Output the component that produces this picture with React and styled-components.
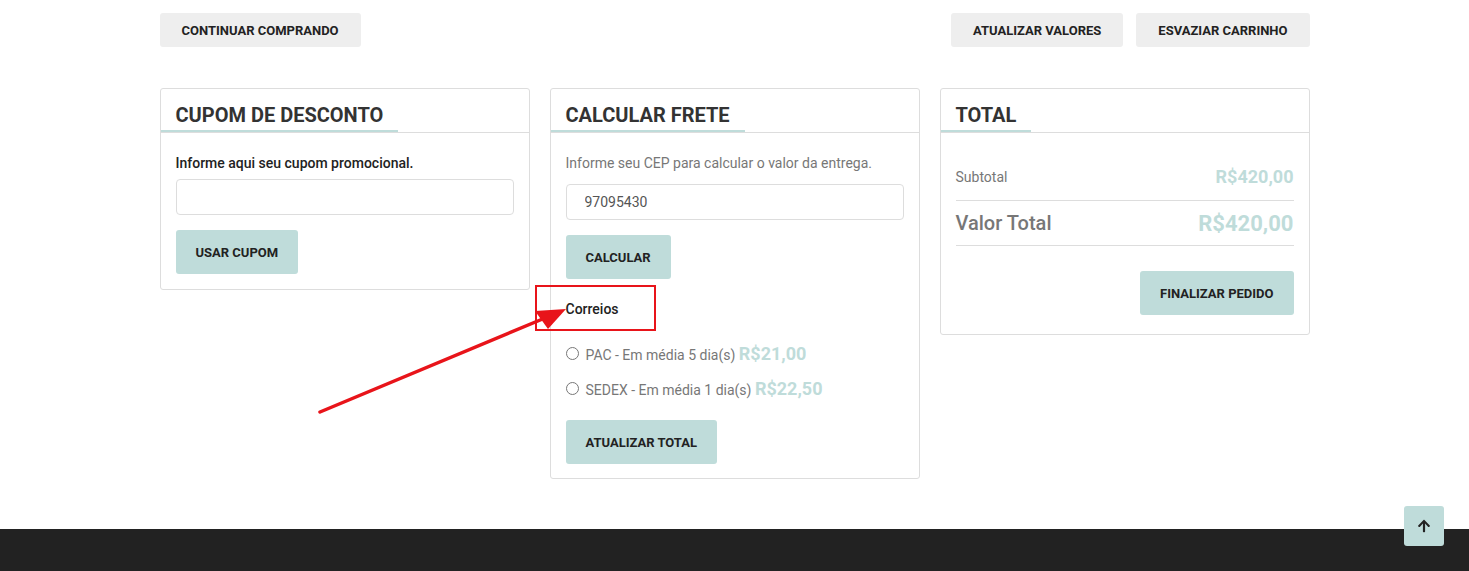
import React from "react";
import styled, { createGlobalStyle } from "styled-components";
import { FaArrowUp } from "react-icons/fa";

const TEAL = "#bfdcda";

const Global = createGlobalStyle`
  html, body { margin: 0; padding: 0; background: #fff; }
  body { font-family: Roboto, "Liberation Sans", Arial, sans-serif; color: #333; }
  * { box-sizing: border-box; }
`;

const Page = styled.div`
  position: relative;
  min-height: 571px;
  overflow: hidden;
`;

const Container = styled.div`
  width: 1150px;
  margin: 0 auto;
  padding-top: 13px;
`;

const Toolbar = styled.div`
  display: flex;
  justify-content: space-between;
  align-items: center;
`;

const ButtonGroup = styled.div`
  display: flex;
  gap: 13px;
`;

const Button = styled.button`
  font-family: Roboto, "Liberation Sans", Arial, sans-serif;
  font-weight: 700;
  font-size: 13px;
  text-transform: uppercase;
  color: #222;
  border: none;
  border-radius: 3px;
  cursor: pointer;
  background: ${(p) => (p.$variant === "light" ? "#eeeeee" : TEAL)};
  height: ${(p) => (p.$variant === "light" ? "34px" : "44px")};
  padding: 0 ${(p) => (p.$variant === "light" ? "22px" : "20px")};
  margin-top: ${(p) => p.$mt || 0}px;
  align-self: ${(p) => (p.$right ? "flex-end" : "flex-start")};
`;

const Grid = styled.div`
  display: grid;
  grid-template-columns: repeat(3, 370px);
  column-gap: 20px;
  align-items: start;
  margin-top: 41px;
`;

const Card = styled.section`
  border: 1px solid #ddd;
  border-radius: 3px;
  background: #fff;
`;

const CardHeader = styled.div`
  border-bottom: 1px solid #ddd;
  display: flex;
`;

const CardTitle = styled.h2`
  margin: 0;
  font-size: 20px;
  line-height: 24px;
  font-weight: 700;
  color: #333;
  padding: 14px 15px 3px;
  border-bottom: 2px solid ${TEAL};
  text-transform: uppercase;
`;

const CardBody = styled.div`
  display: flex;
  flex-direction: column;
  padding: ${(p) => p.$pt || 20}px 15px ${(p) => p.$pb || 15}px;
`;

const Label = styled.p`
  margin: 0;
  font-size: 14px;
  line-height: 20px;
  font-weight: ${(p) => (p.$muted ? 400 : 500)};
  color: ${(p) => (p.$muted ? "#777" : "#222")};
  margin-top: ${(p) => p.$mt || 0}px;
`;

const Input = styled.input`
  height: 36px;
  width: 100%;
  border: 1px solid #ddd;
  border-radius: 4px;
  padding: 0 18px;
  font-family: Roboto, "Liberation Sans", Arial, sans-serif;
  font-size: 14px;
  color: #555;
  margin-top: ${(p) => p.$mt || 0}px;
  outline: none;
`;

const RadioRow = styled.label`
  display: flex;
  align-items: center;
  gap: 7px;
  height: 24px;
  margin-top: ${(p) => p.$mt || 0}px;
  font-size: 14px;
  color: #777;
`;

const Radio = styled.input.attrs({ type: "radio" })`
  appearance: none;
  width: 13px;
  height: 13px;
  margin: 0;
  border: 1px solid #777;
  border-radius: 50%;
  background: #fff;
`;

const Price = styled.span`
  font-weight: 700;
  color: ${TEAL};
  font-size: ${(p) => p.$size || 18}px;
  margin-left: ${(p) => p.$ml || 0}px;
`;

const SummaryRow = styled.div`
  display: flex;
  justify-content: space-between;
  align-items: center;
  border-bottom: 1px solid #ddd;
  padding: ${(p) => (p.$big ? "11px 0 10px" : "12px 0")};
  line-height: ${(p) => (p.$big ? 23 : 22)}px;
`;

const SummaryLabel = styled.span`
  color: #777;
  font-size: ${(p) => (p.$big ? 20 : 14)}px;
  font-weight: ${(p) => (p.$big ? 500 : 400)};
`;

const Footer = styled.footer`
  height: 100px;
  background: #222;
  margin-top: 50px;
`;

const BackToTop = styled.button`
  position: fixed;
  right: 25px;
  bottom: 25px;
  width: 40px;
  height: 40px;
  border: none;
  border-radius: 3px;
  background: ${TEAL};
  color: #222;
  display: flex;
  align-items: center;
  justify-content: center;
  padding: 0;
`;

const Highlight = styled.div`
  position: absolute;
  left: 535px;
  top: 285px;
  width: 121px;
  height: 46px;
  border: 2px solid #e8141a;
  pointer-events: none;
`;

const ArrowLayer = styled.svg`
  position: absolute;
  left: 0;
  top: 0;
  pointer-events: none;
`;

export default function App() {
  return (
    <Page>
      <Global />
      <Container>
        <Toolbar>
          <Button $variant="light">Continuar comprando</Button>
          <ButtonGroup>
            <Button $variant="light">Atualizar valores</Button>
            <Button $variant="light">Esvaziar carrinho</Button>
          </ButtonGroup>
        </Toolbar>

        <Grid>
          <Card>
            <CardHeader>
              <CardTitle>Cupom de desconto</CardTitle>
            </CardHeader>
            <CardBody>
              <Label>Informe aqui seu cupom promocional.</Label>
              <Input $mt={6} />
              <Button $mt={15}>Usar cupom</Button>
            </CardBody>
          </Card>

          <Card>
            <CardHeader>
              <CardTitle>Calcular frete</CardTitle>
            </CardHeader>
            <CardBody $pb={14}>
              <Label $muted>Informe seu CEP para calcular o valor da entrega.</Label>
              <Input $mt={11} defaultValue="97095430" />
              <Button $mt={15}>Calcular</Button>
              <Label $mt={20}>Correios</Label>
              <RadioRow $mt={22}>
                <Radio name="frete" />
                <span>
                  PAC - Em média 5 dia(s) <Price>R$21,00</Price>
                </span>
              </RadioRow>
              <RadioRow $mt={11}>
                <Radio name="frete" />
                <span>
                  SEDEX - Em média 1 dia(s) <Price>R$22,50</Price>
                </span>
              </RadioRow>
              <Button $mt={20}>Atualizar total</Button>
            </CardBody>
          </Card>

          <Card>
            <CardHeader>
              <CardTitle>Total</CardTitle>
            </CardHeader>
            <CardBody $pt={21} $pb={19}>
              <SummaryRow>
                <SummaryLabel>Subtotal</SummaryLabel>
                <Price $size={18}>R$420,00</Price>
              </SummaryRow>
              <SummaryRow $big>
                <SummaryLabel $big>Valor Total</SummaryLabel>
                <Price $size={22}>R$420,00</Price>
              </SummaryRow>
              <Button $mt={25} $right>
                Finalizar pedido
              </Button>
            </CardBody>
          </Card>
        </Grid>
      </Container>
      <Footer />

      <Highlight />
      <ArrowLayer width="1469" height="571" viewBox="0 0 1469 571">
        <line x1="320" y1="412" x2="545" y2="318" stroke="#e8141a" strokeWidth="3.5" strokeLinecap="round" />
        <polygon points="566,309 535,311 548,329" fill="#e8141a" />
      </ArrowLayer>

      <BackToTop aria-label="Voltar ao topo">
        <FaArrowUp size={14} />
      </BackToTop>
    </Page>
  );
}
